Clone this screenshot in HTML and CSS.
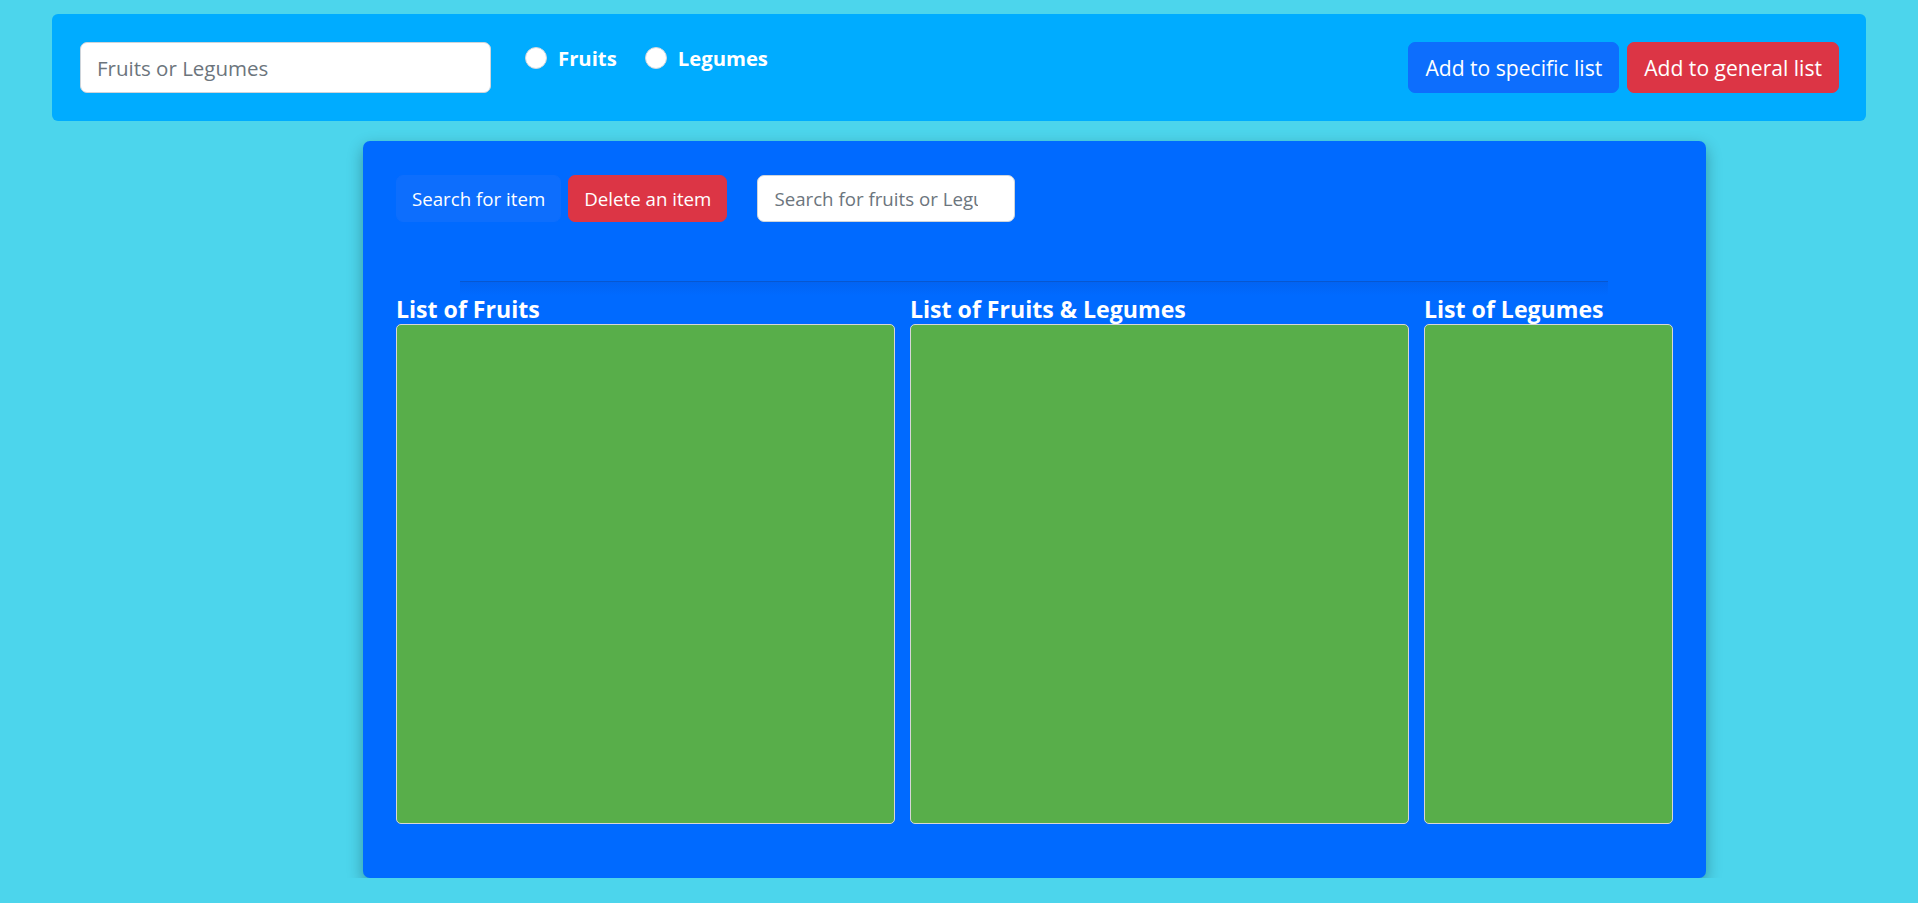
FILE: index.html
```html
<!DOCTYPE html>
<html lang="en">
<head>
<meta charset="utf-8">
<title>Fruits and Legumes</title>
<link rel="stylesheet" href="styles.css">
</head>
<body>
<header class="topbar">
  <input class="field field-lg" type="text" placeholder="Fruits or Legumes">
  <div class="radios">
    <label class="radio"><span class="dot"></span><span>Fruits</span></label>
    <label class="radio"><span class="dot"></span><span>Legumes</span></label>
  </div>
  <div class="actions">
    <button class="btn btn-lg btn-primary">Add to specific list</button>
    <button class="btn btn-lg btn-danger">Add to general list</button>
  </div>
</header>
<main class="panel">
  <div class="toolbar">
    <button class="btn btn-primary">Search for item</button>
    <button class="btn btn-danger">Delete an item</button>
    <input class="field search" type="text" placeholder="Search for fruits or Legumes">
  </div>
  <div class="divider"></div>
  <section class="lists">
    <div class="list">
      <h2 class="list-title">List of Fruits</h2>
      <div class="list-box"></div>
    </div>
    <div class="list">
      <h2 class="list-title">List of Fruits &amp; Legumes</h2>
      <div class="list-box"></div>
    </div>
    <div class="list">
      <h2 class="list-title">List of Legumes</h2>
      <div class="list-box"></div>
    </div>
  </section>
</main>
</body>
</html>
```
FILE: styles.css
```css
* { box-sizing: border-box; }
body {
  margin: 0;
  background: #4cd5ec;
  font-family: "Open Sans", "Noto Sans", sans-serif;
  color: #212529;
}
.topbar {
  margin: 14px 52px 0;
  padding: 28px 27px 28px 28px;
  background: #00acff;
  border-radius: 6px;
  display: flex;
  align-items: flex-start;
}
.field {
  font-family: inherit;
  border: 1px solid #ced4da;
  background: #fff;
  border-radius: 7px;
  color: #212529;
  outline: none;
}
.field::placeholder { color: #6c757d; }
.field-lg {
  width: 411px;
  height: 51px;
  padding: 0 16px;
  font-size: 20.5px;
}
.radios {
  display: flex;
  gap: 28px;
  margin: 5px 0 0 34px;
}
.radio {
  display: flex;
  align-items: center;
  gap: 11px;
  color: #fff;
  font-weight: 700;
  font-size: 20.3px;
  line-height: 22px;
}
.dot {
  width: 22px;
  height: 22px;
  border-radius: 50%;
  background: #fff;
  border: 1px solid #d0d7de;
}
.actions {
  margin-left: auto;
  display: flex;
  gap: 8px;
}
.btn {
  font-family: inherit;
  color: #fff;
  border: 1px solid transparent;
  border-radius: 7px;
  height: 47px;
  padding: 0 15px;
  font-size: 18.7px;
  cursor: pointer;
}
.btn-lg {
  height: 51px;
  padding: 0 16px;
  font-size: 21.1px;
}
.btn-primary { background: #0d6efd; border-color: #0d6efd; }
.btn-danger { background: #dc3545; border-color: #dc3545; }
.panel {
  margin: 20px 0 0 363px;
  width: 1343px;
  padding: 34px 34px 54px 33px;
  background: #006aff;
  border-radius: 7px;
  box-shadow: 0 6px 16px rgba(0, 0, 0, 0.3);
}
.toolbar {
  display: flex;
  gap: 7px;
}
.search {
  margin-left: 23px;
  width: 258px;
  height: 47px;
  padding: 0 36px 0 16px;
  font-size: 18.7px;
}
.divider {
  width: 90%;
  margin: 59px auto 0;
  border-top: 1px solid #0857cf;
  height: 14px;
  background: linear-gradient(#0263f2, #006aff);
  box-shadow: 6px 0 10px -8px rgba(0, 0, 0, 0.25);
}
.lists {
  display: grid;
  grid-template-columns: 499px 499px 249px;
  column-gap: 15px;
}
.list-title {
  margin: 0;
  color: #fff;
  font-size: 23.1px;
  font-weight: 700;
  line-height: 29px;
}
.list-box {
  height: 500px;
  background: #58ae4a;
  border: 1px solid #d6d6d6;
  border-radius: 5px;
}
```
